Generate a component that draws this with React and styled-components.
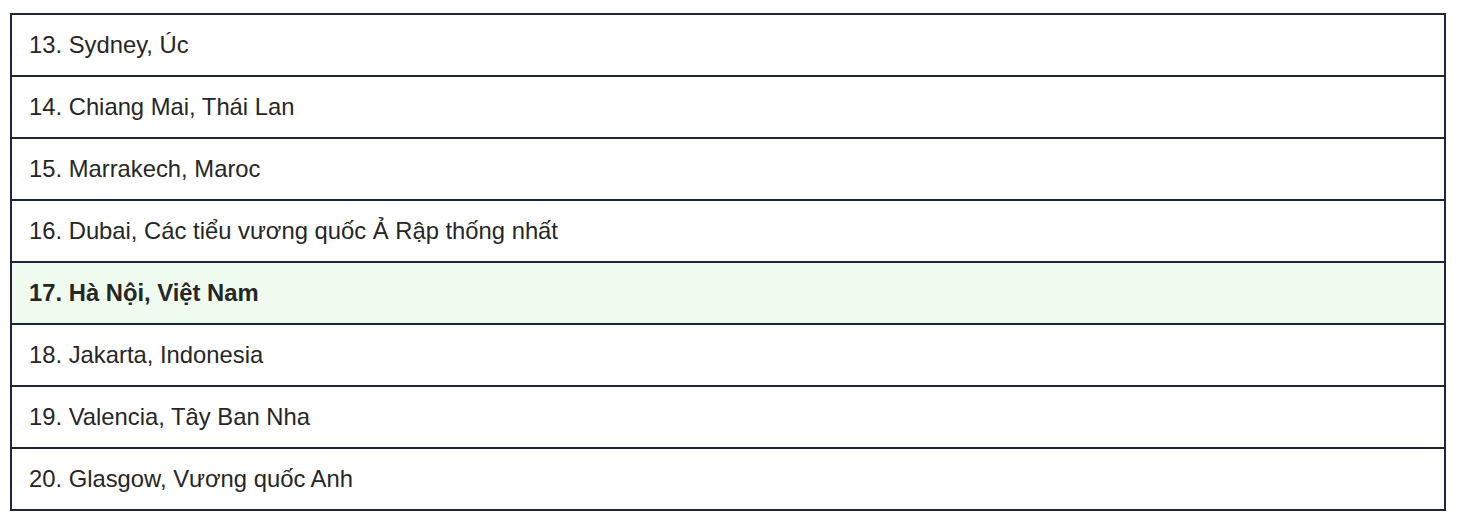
import React from 'react';
import styled, { createGlobalStyle } from 'styled-components';

const GlobalStyle = createGlobalStyle`
  body {
    margin: 0;
    background: #ffffff;
    font-family: "Liberation Sans", Arial, sans-serif;
  }
`;

const Page = styled.div`
  padding: 13px 14px 0 10px;
`;

const Table = styled.table`
  width: 100%;
  border-collapse: collapse;
  border: 2px solid #1e2736;
`;

const Row = styled.tr`
  background: ${(p) => (p.$highlight ? '#effbee' : '#ffffff')};
`;

const Cell = styled.td`
  height: 62px;
  padding: 0 17px;
  border: 2px solid #1e2736;
  font-size: 23.8px;
  color: #262626;
  font-weight: ${(p) => (p.$bold ? 700 : 400)};
  box-sizing: border-box;
`;

const cities = [
  '13. Sydney, Úc',
  '14. Chiang Mai, Thái Lan',
  '15. Marrakech, Maroc',
  '16. Dubai, Các tiểu vương quốc Ả Rập thống nhất',
  '17. Hà Nội, Việt Nam',
  '18. Jakarta, Indonesia',
  '19. Valencia, Tây Ban Nha',
  '20. Glasgow, Vương quốc Anh',
];

const App = () => {
  return (
    <Page>
      <GlobalStyle />
      <Table>
        <tbody>
          {cities.map((c) => {
            const hl = c.startsWith('17.');
            return (
              <Row key={c} $highlight={hl}>
                <Cell $bold={hl}>{c}</Cell>
              </Row>
            );
          })}
        </tbody>
      </Table>
    </Page>
  );
};

export default App;
